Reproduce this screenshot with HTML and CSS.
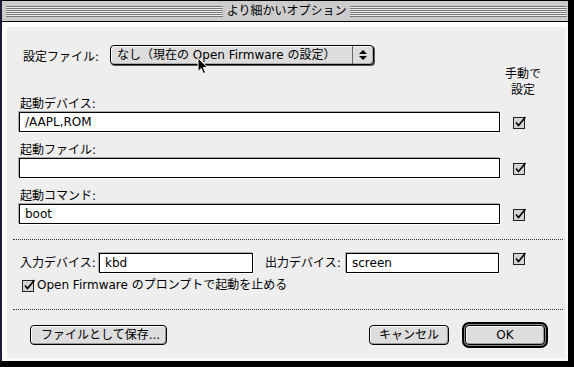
FILE: index.html
```html
<!DOCTYPE html>
<html lang="ja">

<head>
    <meta charset="UTF-8">
    <meta name="viewport" content="width=device-width, initial-scale=1.0">
    <title>より細かいオプション</title>
    <link rel="stylesheet" href="styles.css">
</head>

<body>
    <div class="window">
        <div class="titlebar">
            <span class="stripes"></span>
            <span class="title">より細かいオプション</span>
            <span class="stripes"></span>
        </div>
        <div class="frame">
            <div class="content">
                <div class="section">
                    <div class="popup-row">
                        <span class="popup-label">設定ファイル:</span>
                        <div class="popup">
                            <span class="popup-text">なし（現在の Open Firmware の設定）</span>
                            <span class="popup-arrows">
                                <svg width="8" height="12" viewBox="0 0 8 12">
                                    <path d="M0 5 L4 1 L8 5 Z M0 7 L8 7 L4 11 Z" fill="#000" />
                                </svg>
                            </span>
                        </div>
                    </div>

                    <div class="manual-head">手動で<br>設定</div>

                    <div class="field">
                        <label class="field-label">起動デバイス:</label>
                        <div class="field-row">
                            <input class="text-input wide" type="text" value="/AAPL,ROM">
                            <span class="check-cell">
                                <svg class="check" width="14" height="13" viewBox="0 0 14 13">
                                    <rect x="0.5" y="1.5" width="11" height="11" fill="#d4d4d4" stroke="#222" />
                                    <path d="M3 6.5 L5.5 9.5 L12.5 1" fill="none" stroke="#000" stroke-width="1.6" />
                                </svg>
                            </span>
                        </div>
                    </div>

                    <div class="field">
                        <label class="field-label">起動ファイル:</label>
                        <div class="field-row">
                            <input class="text-input wide" type="text" value="">
                            <span class="check-cell">
                                <svg class="check" width="14" height="13" viewBox="0 0 14 13">
                                    <rect x="0.5" y="1.5" width="11" height="11" fill="#d4d4d4" stroke="#222" />
                                    <path d="M3 6.5 L5.5 9.5 L12.5 1" fill="none" stroke="#000" stroke-width="1.6" />
                                </svg>
                            </span>
                        </div>
                    </div>

                    <div class="field">
                        <label class="field-label">起動コマンド:</label>
                        <div class="field-row">
                            <input class="text-input wide" type="text" value="boot">
                            <span class="check-cell">
                                <svg class="check" width="14" height="13" viewBox="0 0 14 13">
                                    <rect x="0.5" y="1.5" width="11" height="11" fill="#d4d4d4" stroke="#222" />
                                    <path d="M3 6.5 L5.5 9.5 L12.5 1" fill="none" stroke="#000" stroke-width="1.6" />
                                </svg>
                            </span>
                        </div>
                    </div>
                </div>

                <div class="dots first"></div>

                <div class="section">
                    <div class="io-row">
                        <span class="io-label">入力デバイス:</span>
                        <input class="text-input io-input" type="text" value="kbd">
                        <span class="io-label out">出力デバイス:</span>
                        <input class="text-input io-input out" type="text" value="screen">
                        <span class="check-cell">
                            <svg class="check" width="14" height="13" viewBox="0 0 14 13">
                                <rect x="0.5" y="1.5" width="11" height="11" fill="#d4d4d4" stroke="#222" />
                                <path d="M3 6.5 L5.5 9.5 L12.5 1" fill="none" stroke="#000" stroke-width="1.6" />
                            </svg>
                        </span>
                    </div>
                    <div class="prompt-row">
                        <svg class="check" width="14" height="13" viewBox="0 0 14 13">
                            <rect x="0.5" y="1.5" width="11" height="11" fill="#d4d4d4" stroke="#222" />
                            <path d="M3 6.5 L5.5 9.5 L12.5 1" fill="none" stroke="#000" stroke-width="1.6" />
                        </svg>
                        <span>Open Firmware のプロンプトで起動を止める</span>
                    </div>
                </div>

                <div class="dots second"></div>

                <div class="buttons">
                    <button class="btn save">ファイルとして保存...</button>
                    <span class="spacer"></span>
                    <button class="btn cancel">キャンセル</button>
                    <span class="default-ring">
                        <button class="btn ok">OK</button>
                    </span>
                </div>
            </div>
        </div>

        <svg class="cursor" width="13" height="18" viewBox="0 0 13 18">
            <path d="M1 1 L1 14.5 L4.2 11.5 L6.5 16.5 L8.6 15.6 L6.4 10.6 L10.8 10.6 Z" fill="#000" stroke="#fff" stroke-width="1" />
        </svg>
    </div>
</body>

</html>
```

FILE: styles.css
```css
body {
    margin: 0;
    background-color: #000;
    font-family: "DejaVu Sans", "Noto Sans CJK JP", sans-serif;
    font-size: 12px;
    color: #000;
}

.window {
    position: relative;
    width: 566px;
    border: 1px solid #000;
    border-left: 2px solid #1c1c3a;
    background-color: #eee;
}

.titlebar {
    display: flex;
    align-items: center;
    height: 20px;
    padding: 0 1px 0 4px;
    background-color: #ccc;
    border-bottom: 1px solid #000;
}

.stripes {
    flex: 1;
    height: 11px;
    background: repeating-linear-gradient(to bottom, #777 0, #777 1px, #eee 1px, #eee 2px);
}

.title {
    padding: 0 4px;
    line-height: 20px;
    white-space: nowrap;
}

.frame {
    border-top: 5px solid #fff;
    border-left: 5px solid #fff;
    border-right: 3px solid #f8f8f8;
    border-bottom: 3px solid #f8f8f8;
}

.content {
    height: 331px;
    background-color: #eee;
    padding-top: 18px;
    box-sizing: border-box;
}

.section {
    padding-left: 12px;
}

.popup-row {
    display: flex;
    align-items: center;
    height: 20px;
}

.popup-label {
    width: 87px;
    margin-left: 4px;
}

.popup {
    display: flex;
    width: 264px;
    height: 20px;
    box-sizing: border-box;
    border: 1px solid #000;
    border-radius: 4px;
    background-color: #ddd;
    box-shadow: inset 1px 1px 0 #fff, inset -1px -1px 0 #aaa, 1px 1px 0 #555;
}

.popup-text {
    flex: 1;
    padding-left: 6px;
    line-height: 18px;
    white-space: nowrap;
}

.popup-arrows {
    display: flex;
    align-items: center;
    justify-content: center;
    width: 20px;
    border-left: 1px solid #666;
}

.manual-head {
    margin: 1px 0 -1px 481px;
    width: 46px;
    text-align: center;
    line-height: 16px;
}

.field {
    display: flex;
    flex-direction: column;
    margin-bottom: 11px;
}

.field-label {
    line-height: 15px;
    padding-left: 1px;
}

.field-row {
    display: flex;
    align-items: center;
}

.text-input {
    height: 20px;
    box-sizing: border-box;
    border: 1px solid #000;
    background-color: #fff;
    padding: 0 5px;
    font-family: inherit;
    font-size: 12px;
    outline: none;
    box-shadow: -1px -1px 0 #aaa, 1px 1px 0 #fff;
}

.text-input.wide {
    width: 481px;
}

.check-cell {
    display: flex;
    margin-left: 13px;
}

.check {
    display: block;
}

.dots {
    height: 0;
    margin: 0 2px 0 6px;
    border-top: 1px dotted #333;
}

/* the last field's bottom margin collapses into this one */
.dots.first {
    margin-top: 15px;
    margin-bottom: 13px;
}

.dots.second {
    margin-top: 17px;
}

.io-row {
    display: flex;
    align-items: flex-start;
}

.io-label {
    width: 79px;
    padding-left: 1px;
    line-height: 20px;
}

.io-label.out {
    width: 81px;
    margin-left: 11px;
}

.io-input {
    width: 154px;
}

.io-input.out {
    width: 153px;
}

.io-row .check-cell {
    margin-left: 14px;
    margin-top: -1px;
}

.prompt-row {
    display: flex;
    align-items: center;
    gap: 1px;
    margin: 5px 0 0 3px;
    line-height: 14px;
}

.buttons {
    display: flex;
    align-items: center;
    margin-top: 12px;
    padding: 0 17px 0 23px;
}

.spacer {
    flex: 1;
}

.btn {
    height: 20px;
    padding: 0;
    border: 1px solid #000;
    border-radius: 4px;
    background-color: #ddd;
    color: #000;
    font-family: inherit;
    font-size: 12px;
    line-height: 18px;
    box-shadow: inset 1px 1px 0 #fff, inset -1px -1px 0 #999;
}

.btn.save {
    width: 137px;
    text-align: left;
    padding-left: 10px;
}

.btn.cancel {
    width: 80px;
    margin-right: 13px;
}

.default-ring {
    display: flex;
    padding: 1px;
    border: 2px solid #000;
    border-radius: 7px;
    background-color: #888;
}

.btn.ok {
    width: 80px;
}

.cursor {
    position: absolute;
    left: 195px;
    top: 56px;
}
```
